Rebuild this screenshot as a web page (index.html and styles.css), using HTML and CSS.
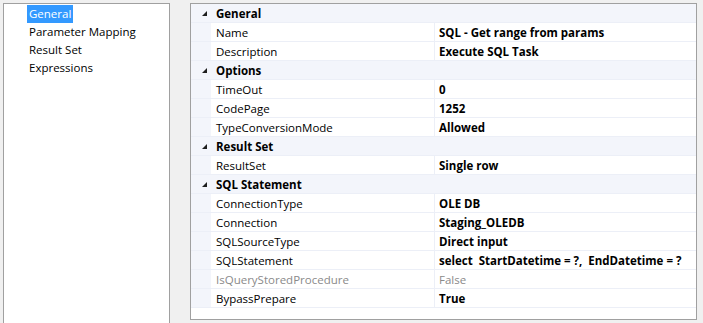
FILE: index.html
```html
<!DOCTYPE html>
<html>
<head>
<meta charset="utf-8">
<link rel="stylesheet" href="styles.css">
</head>
<body>
<div class="page">
  <div class="tree">
    <div class="node"><span class="sel">General</span></div>
    <div class="node"><span>Parameter Mapping</span></div>
    <div class="node"><span>Result Set</span></div>
    <div class="node"><span>Expressions</span></div>
  </div>
  <div class="grid">
    <div class="row cat"><span class="tri"><svg width="7" height="7" viewBox="0 0 7 7"><polygon points="6,1 6,6 1,6" fill="#1e1e1e"/></svg></span><span class="catname">General</span></div>
    <div class="row"><span class="m"></span><span class="n">Name</span><span class="v">SQL - Get range from params</span></div>
    <div class="row"><span class="m"></span><span class="n">Description</span><span class="v">Execute SQL Task</span></div>
    <div class="row cat"><span class="tri"><svg width="7" height="7" viewBox="0 0 7 7"><polygon points="6,1 6,6 1,6" fill="#1e1e1e"/></svg></span><span class="catname">Options</span></div>
    <div class="row"><span class="m"></span><span class="n">TimeOut</span><span class="v">0</span></div>
    <div class="row"><span class="m"></span><span class="n">CodePage</span><span class="v">1252</span></div>
    <div class="row"><span class="m"></span><span class="n">TypeConversionMode</span><span class="v">Allowed</span></div>
    <div class="row cat"><span class="tri"><svg width="7" height="7" viewBox="0 0 7 7"><polygon points="6,1 6,6 1,6" fill="#1e1e1e"/></svg></span><span class="catname">Result Set</span></div>
    <div class="row"><span class="m"></span><span class="n">ResultSet</span><span class="v">Single row</span></div>
    <div class="row cat"><span class="tri"><svg width="7" height="7" viewBox="0 0 7 7"><polygon points="6,1 6,6 1,6" fill="#1e1e1e"/></svg></span><span class="catname">SQL Statement</span></div>
    <div class="row"><span class="m"></span><span class="n">ConnectionType</span><span class="v">OLE DB</span></div>
    <div class="row"><span class="m"></span><span class="n">Connection</span><span class="v">Staging_OLEDB</span></div>
    <div class="row"><span class="m"></span><span class="n">SQLSourceType</span><span class="v">Direct input</span></div>
    <div class="row"><span class="m"></span><span class="n">SQLStatement</span><span class="v">select&nbsp; StartDatetime = ?,&nbsp; EndDatetime = ?</span></div>
    <div class="row dis"><span class="m"></span><span class="n">IsQueryStoredProcedure</span><span class="v">False</span></div>
    <div class="row"><span class="m"></span><span class="n">BypassPrepare</span><span class="v">True</span></div>
  </div>
</div>
</body>
</html>
```

FILE: styles.css
```css
html, body {
  margin: 0;
  padding: 0;
  background: #f0f0f0;
  overflow: hidden;
}
body {
  font-family: "Open Sans", "Noto Sans", sans-serif;
  font-size: 11.5px;
  color: #000;
}
.page {
  display: flex;
  align-items: flex-start;
  gap: 20px;
  padding: 3px 0 0 3px;
  height: 323px;
  box-sizing: border-box;
}
.tree {
  width: 167px;
  height: 320px;
  background: #fff;
  border: 1px solid #a0a0a0;
  border-bottom: none;
  padding-top: 1px;
  box-sizing: border-box;
}
.node {
  height: 18px;
  line-height: 18px;
  padding-left: 23px;
}
.node span {
  display: inline-block;
  padding: 0 2px;
}
.node .sel {
  background: #3399ff;
  color: #fff;
}
.grid {
  width: 507px;
  height: 317px;
  background: #fff;
  border: 1px solid #a0a0a0;
  box-sizing: border-box;
}
.row {
  display: grid;
  grid-template-columns: 20px 224px 1fr;
  height: 19px;
  box-sizing: border-box;
  border-bottom: 1px solid #eceff7;
  line-height: 18px;
}
.row > span {
  padding-top: 1px;
  line-height: 17px;
}
.row .m {
  background: #f3f5fb;
}
.row .n {
  padding-left: 5px;
  border-right: 1px solid #eceff7;
  white-space: nowrap;
}
.row .v {
  padding-left: 4px;
  font-weight: 700;
  white-space: nowrap;
}
.row.cat {
  background: #f3f5fb;
  grid-template-columns: 20px 1fr;
}
.row.cat .tri {
  display: flex;
  align-items: center;
  justify-content: flex-end;
  padding-right: 3px;
}
.row.cat .catname {
  padding-left: 5px;
  font-weight: 700;
}
.row.dis .n,
.row.dis .v {
  color: #8a8a8a;
  font-weight: 400;
}
```
